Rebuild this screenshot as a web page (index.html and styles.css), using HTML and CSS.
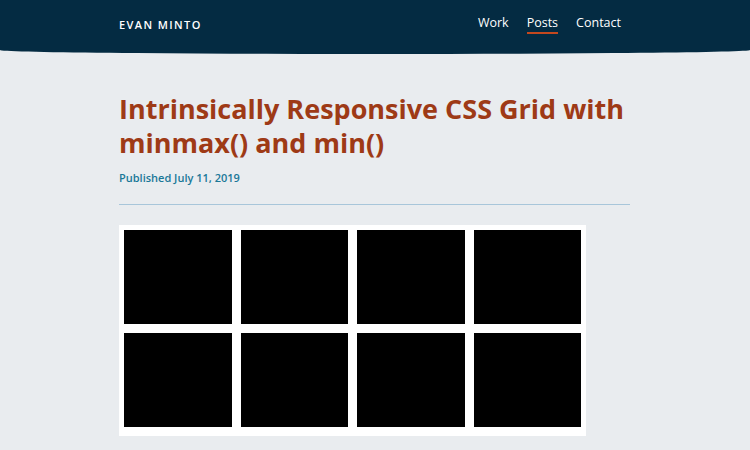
FILE: index.html
```html
<!DOCTYPE html>
<html>
<head>
<meta charset="utf-8">
<link rel="stylesheet" href="styles.css">
</head>
<body>
<header class="site-header">
  <div class="header-inner">
    <a class="brand">EVAN MINTO</a>
    <nav class="nav">
      <a class="nav-link">Work</a>
      <a class="nav-link active">Posts</a>
      <a class="nav-link">Contact</a>
    </nav>
  </div>
</header>
<main class="content">
  <h1 class="title">Intrinsically Responsive CSS Grid with minmax() and min()</h1>
  <p class="date">Published July 11, 2019</p>
  <hr class="divider">
  <div class="demo">
    <div class="cell"></div><div class="cell"></div><div class="cell"></div><div class="cell"></div>
    <div class="cell"></div><div class="cell"></div><div class="cell"></div><div class="cell"></div>
  </div>
</main>
</body>
</html>
```
FILE: styles.css
```css
* { box-sizing: border-box; }
html, body { margin: 0; padding: 0; }
body {
  background: #e9ecef;
  font-family: "Open Sans", "DejaVu Sans", sans-serif;
  overflow: hidden;
}
.site-header {
  background: #042b42;
  height: 54px;
  border-radius: 0 0 50% 50% / 0 0 4px 4px;
}
.header-inner {
  display: flex;
  justify-content: space-between;
  align-items: center;
  height: 48px;
  padding: 0 129px 0 119px;
}
.brand {
  color: #ffffff;
  font-size: 11px;
  font-weight: 600;
  letter-spacing: 1.4px;
}
.nav {
  display: flex;
  gap: 18px;
}
.nav-link {
  color: #ffffff;
  font-size: 12.5px;
  font-weight: 500;
  padding-bottom: 1px;
}
.nav-link.active {
  border-bottom: 2px solid #c4481e;
}
.content {
  padding: 38px 120px 0 119px;
}
.title {
  margin: 0;
  color: #9e3a16;
  font-size: 27px;
  line-height: 34px;
  font-weight: 700;
  max-width: 511px;
}
.date {
  margin: 10px 0 0;
  color: #1a7898;
  font-size: 11px;
  font-weight: 600;
}
.divider {
  margin: 19px 0 0;
  border: 0;
  border-top: 1px solid #a8c6da;
  width: 511px;
}
.demo {
  margin-top: 20px;
  width: 467px;
  background: #ffffff;
  padding: 5px 5px 9px;
  display: grid;
  grid-template-columns: repeat(4, 1fr);
  gap: 9px;
}
.cell {
  background: #000000;
  height: 94px;
}
```
